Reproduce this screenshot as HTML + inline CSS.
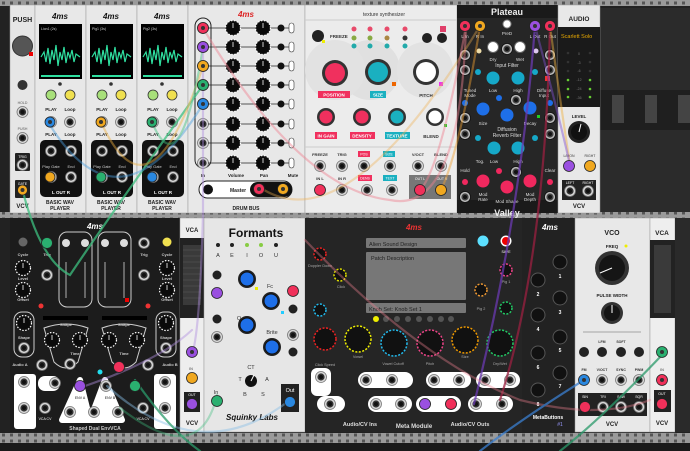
<!DOCTYPE html><html><head><meta charset="utf-8"><style>
html,body{margin:0;padding:0;background:#1c1c1c;width:690px;height:451px;overflow:hidden}
svg{display:block}
text{font-family:"Liberation Sans",sans-serif}
</style></head><body>
<svg width="690" height="451" viewBox="0 0 690 451" xmlns="http://www.w3.org/2000/svg">
<defs>
<pattern id="rail" width="8" height="6" patternUnits="userSpaceOnUse"><rect width="8" height="6" fill="#9a9a9a"/><rect x="2" y="1.5" width="3" height="3" fill="#555"/></pattern>
<g id="jk"><circle r="5.5" fill="#d8d8d8" stroke="#777" stroke-width="0.8"/><circle r="3.6" fill="#333"/><circle r="2" fill="#111"/></g>
<g id="jkd"><circle r="5.5" fill="#bbb" stroke="#111" stroke-width="0.8"/><circle r="3.6" fill="#444"/><circle r="2" fill="#111"/></g>
<g id="kn"><circle r="7.5" fill="#111" stroke="#fff" stroke-width="1.2" stroke-dasharray="1.5 1.5"/><circle r="6" fill="#0a0a0a"/><line x1="0" y1="0" x2="0" y2="-5" stroke="#ccc" stroke-width="1"/></g>
<g id="knb"><circle r="9" fill="#222"/><circle r="7" fill="#1e6fe8"/><circle r="7" fill="none" stroke="#111" stroke-width="1"/></g>
<g id="scr"><circle r="2" fill="#444"/></g>
</defs>
<!-- background rack -->
<rect width="690" height="451" fill="#222"/>
<rect x="600" y="8" width="90" height="205" fill="#2b2b2b"/>
<rect x="600" y="90" width="90" height="40" fill="#1f1f1f"/>
<g fill="#444"><rect x="612" y="95" width="12" height="28"/><rect x="645" y="95" width="12" height="28"/><rect x="678" y="95" width="12" height="28"/></g>
<!-- rails -->
<rect x="0" y="0" width="690" height="6" fill="url(#rail)"/>
<rect x="0" y="212" width="690" height="6" fill="url(#rail)"/>
<rect x="0" y="433" width="690" height="10" fill="url(#rail)"/>
<rect x="0" y="443" width="690" height="8" fill="#1a1a1a"/>

<!-- ===== TOP ROW ===== -->
<!-- PUSH -->
<rect x="10" y="5" width="25" height="208" fill="#e6e6e6" stroke="#999" stroke-width="0.5"/>
<text x="22.5" y="22" font-size="7" font-weight="bold" text-anchor="middle" fill="#222">PUSH</text>
<circle cx="22.5" cy="46" r="10" fill="#555" stroke="#333"/><rect x="29" y="52" width="4" height="4" fill="#e00"/>
<circle cx="22.5" cy="85" r="5" fill="#333"/>
<text x="22.5" y="104" font-size="3.5" text-anchor="middle" fill="#555">HOLD</text>
<use href="#jk" x="22.5" y="112"/>
<text x="22.5" y="130" font-size="3.5" text-anchor="middle" fill="#555">PUSH</text>
<use href="#jk" x="22.5" y="138"/>
<rect x="15" y="153" width="15" height="18" fill="#222" rx="1"/><text x="22.5" y="158" font-size="3.5" fill="#fff" text-anchor="middle">TRIG</text><use href="#jk" x="22.5" y="165"/>
<rect x="15" y="180" width="15" height="18" fill="#222" rx="1"/><text x="22.5" y="185" font-size="3.5" fill="#fff" text-anchor="middle">GATE</text>
<text x="22.5" y="208" font-size="6" font-weight="bold" text-anchor="middle" fill="#222">VCV</text>

<!-- WAV players -->
<g id="wp">
<rect x="35" y="5" width="51" height="208" fill="#e8e8e8" stroke="#999" stroke-width="0.5"/>
<text x="60" y="19" font-size="8" font-weight="bold" font-style="italic" text-anchor="middle" fill="#111">4ms</text>
<rect x="39" y="24" width="43" height="55" fill="#000"/>
<path d="M41 57 L44 52 L46 62 L48 48 L50 64 L52 50 L54 60 L56 45 L58 66 L60 52 L62 60 L64 47 L66 63 L68 52 L70 58 L72 50 L74 62 L76 54 L80 57" stroke="#2fe0a0" stroke-width="1.2" fill="none"/>
<rect x="41" y="75" width="39" height="2" fill="#2fe0a0"/>
<circle cx="60" cy="84" r="1.8" fill="#333"/>
<circle cx="51" cy="95" r="5" fill="#a8e07a" stroke="#333" stroke-width="0.8"/>
<circle cx="70" cy="95" r="5" fill="#f0e050" stroke="#333" stroke-width="0.8"/>
<text x="51" y="111" font-size="4.5" font-weight="bold" text-anchor="middle" fill="#222">PLAY</text>
<text x="70" y="111" font-size="4.5" font-weight="bold" text-anchor="middle" fill="#222">Loop</text>
<use href="#jk" x="51" y="122"/><use href="#jk" x="70" y="122"/>
<text x="51" y="136" font-size="4.5" font-weight="bold" text-anchor="middle" fill="#222">PLAY</text>
<text x="70" y="136" font-size="4.5" font-weight="bold" text-anchor="middle" fill="#222">Loop</text>
<rect x="40" y="140" width="42" height="57" rx="5" fill="#111"/>
<use href="#jk" x="51" y="151"/><use href="#jk" x="71" y="151"/>
<text x="51" y="168" font-size="4" fill="#ccc" text-anchor="middle">Play Gate</text><text x="71" y="168" font-size="4" fill="#ccc" text-anchor="middle">End</text>
<use href="#jk" x="51" y="177"/><use href="#jk" x="71" y="177"/>
<text x="61" y="194" font-size="4.5" fill="#fff" font-weight="bold" text-anchor="middle">L  OUT  R</text>
<text x="60" y="204" font-size="5" font-weight="bold" text-anchor="middle" fill="#222">BASIC WAV</text>
<text x="60" y="210" font-size="5" font-weight="bold" text-anchor="middle" fill="#222">PLAYER</text>
</g>
<use href="#wp" x="51"/><use href="#wp" x="102"/>
<g font-size="3.5" fill="#ccc"><text x="41" y="30">Lion1 (2s)</text><text x="92" y="30">Pig1 (3s)</text><text x="143" y="30">Pig2 (3s)</text></g>

<!-- Drum bus -->
<rect x="188" y="5" width="117" height="208" fill="#e8e8e8" stroke="#999" stroke-width="0.5"/>
<text x="246" y="17" font-size="8" font-weight="bold" font-style="italic" text-anchor="middle" fill="#d22">4ms</text>
<rect x="195" y="18" width="16" height="150" rx="8" fill="none" stroke="#222" stroke-width="1"/>
<g>
<use href="#jk" x="203" y="28"/><use href="#jk" x="203" y="47"/><use href="#jk" x="203" y="66"/><use href="#jk" x="203" y="85"/><use href="#jk" x="203" y="104"/><use href="#jk" x="203" y="124"/><use href="#jk" x="203" y="143"/><use href="#jk" x="203" y="163"/>
</g>
<g stroke="#222" stroke-width="0.8"><line x1="208" y1="28" x2="290" y2="28"/><line x1="208" y1="47" x2="290" y2="47"/><line x1="208" y1="66" x2="290" y2="66"/><line x1="208" y1="85" x2="290" y2="85"/><line x1="208" y1="104" x2="290" y2="104"/><line x1="208" y1="124" x2="290" y2="124"/><line x1="208" y1="143" x2="290" y2="143"/><line x1="208" y1="163" x2="290" y2="163"/></g>
<g>
<use href="#kn" x="233" y="28"/><use href="#kn" x="233" y="47"/><use href="#kn" x="233" y="66"/><use href="#kn" x="233" y="85"/><use href="#kn" x="233" y="104"/><use href="#kn" x="233" y="124"/><use href="#kn" x="233" y="143"/><use href="#kn" x="233" y="163"/>
<use href="#kn" x="263" y="28"/><use href="#kn" x="263" y="47"/><use href="#kn" x="263" y="66"/><use href="#kn" x="263" y="85"/><use href="#kn" x="263" y="104"/><use href="#kn" x="263" y="124"/><use href="#kn" x="263" y="143"/><use href="#kn" x="263" y="163"/>
</g>
<g fill="#111"><circle cx="281" cy="28" r="3.5"/><circle cx="281" cy="47" r="3.5"/><circle cx="281" cy="66" r="3.5"/><circle cx="281" cy="85" r="3.5"/><circle cx="281" cy="104" r="3.5"/><circle cx="281" cy="124" r="3.5"/><circle cx="281" cy="143" r="3.5"/><circle cx="281" cy="163" r="3.5"/></g>
<g fill="#fff" stroke="#333" stroke-width="0.6"><rect x="289" y="23" width="5" height="10" rx="2.5"/><rect x="289" y="42" width="5" height="10" rx="2.5"/><rect x="289" y="61" width="5" height="10" rx="2.5"/><rect x="289" y="80" width="5" height="10" rx="2.5"/><rect x="289" y="99" width="5" height="10" rx="2.5"/><rect x="289" y="119" width="5" height="10" rx="2.5"/><rect x="289" y="138" width="5" height="10" rx="2.5"/><rect x="289" y="158" width="5" height="10" rx="2.5"/></g>
<g font-size="4.5" font-weight="bold" fill="#222" text-anchor="middle"><text x="203" y="177">In</text><text x="236" y="177">Volume</text><text x="264" y="177">Pan</text><text x="293" y="177">Mute</text></g>
<rect x="199" y="181" width="93" height="17" rx="8.5" fill="#fff" stroke="#222"/>
<circle cx="208" cy="189.5" r="5" fill="#111"/>
<text x="230" y="192" font-size="5" font-weight="bold" fill="#222">Master</text>
<rect x="250" y="182" width="42" height="15" rx="7.5" fill="#111"/>
<text x="246" y="210" font-size="5" font-weight="bold" text-anchor="middle" fill="#222">DRUM BUS</text>

<!-- Texture synth -->
<rect x="305" y="5" width="152" height="208" fill="#ececec" stroke="#999" stroke-width="0.5"/>
<text x="384" y="16" font-size="5" text-anchor="middle" fill="#333">texture synthesizer</text>
<line x1="305" y1="20" x2="457" y2="20" stroke="#ccc"/>
<circle cx="370" cy="70" r="30" fill="#e0e0e0"/><circle cx="335" cy="70" r="30" fill="#e2e2e2"/><circle cx="425" cy="70" r="28" fill="#e2e2e2"/>
<circle cx="318" cy="36" r="6" fill="#222"/><rect x="322" y="40" width="3" height="3" fill="#ee0"/>
<text x="330" y="38" font-size="4.5" font-weight="bold" fill="#333">FREEZE</text>
<g fill="#e84a6a"><circle cx="354" cy="29" r="2.5"/><circle cx="370" cy="29" r="2.5"/><circle cx="387" cy="29" r="2.5"/><circle cx="405" cy="29" r="2.5"/></g>
<g fill="#8a4"><circle cx="354" cy="38" r="2.5"/><circle cx="370" cy="38" r="2.5"/></g><circle cx="387" cy="38" r="2.5" fill="#a84"/><circle cx="405" cy="38" r="2.5" fill="#333"/>
<g fill="#2aa"><circle cx="354" cy="46" r="2.5"/><circle cx="370" cy="46" r="2.5"/><circle cx="387" cy="46" r="2.5"/><circle cx="405" cy="46" r="2.5"/></g>
<circle cx="427" cy="38" r="5" fill="#222"/><circle cx="442" cy="38" r="5" fill="#222"/>
<rect x="440" y="26" width="6" height="6" fill="#e0406a"/>
<circle cx="335" cy="73" r="13" fill="#333"/><circle cx="335" cy="73" r="10" fill="#f0305e"/>
<circle cx="378" cy="72" r="13" fill="#333"/><circle cx="378" cy="72" r="10" fill="#1ab0c0"/><rect x="392" y="82" width="4" height="4" fill="#e60"/>
<circle cx="426" cy="72" r="13" fill="#333"/><circle cx="426" cy="72" r="10" fill="#fff"/><rect x="439" y="82" width="4" height="4" fill="#e3e"/>
<rect x="318" y="91" width="32" height="7" fill="#f0305e"/><text x="334" y="96.5" font-size="4.5" fill="#fff" font-weight="bold" text-anchor="middle">POSITION</text>
<rect x="370" y="91" width="16" height="7" fill="#1ab0c0"/><text x="378" y="96.5" font-size="4.5" fill="#fff" font-weight="bold" text-anchor="middle">SIZE</text>
<text x="426" y="97" font-size="4.5" fill="#333" font-weight="bold" text-anchor="middle">PITCH</text>
<circle cx="326" cy="117" r="9" fill="#333"/><circle cx="326" cy="117" r="6.5" fill="#f0305e"/>
<circle cx="362" cy="117" r="9" fill="#333"/><circle cx="362" cy="117" r="6.5" fill="#f0305e"/>
<circle cx="397" cy="117" r="9" fill="#333"/><circle cx="397" cy="117" r="6.5" fill="#1ab0c0"/>
<circle cx="435" cy="117" r="9" fill="#333"/><circle cx="435" cy="117" r="6.5" fill="#fff"/><rect x="444" y="124" width="3" height="3" fill="#2c2"/>
<rect x="315" y="132" width="22" height="7" fill="#f0305e"/><text x="326" y="137.5" font-size="4.5" fill="#fff" font-weight="bold" text-anchor="middle">IN GAIN</text>
<rect x="350" y="132" width="25" height="7" fill="#f0305e"/><text x="362" y="137.5" font-size="4.5" fill="#fff" font-weight="bold" text-anchor="middle">DENSITY</text>
<rect x="385" y="132" width="25" height="7" fill="#1ab0c0"/><text x="397" y="137.5" font-size="4.5" fill="#fff" font-weight="bold" text-anchor="middle">TEXTURE</text>
<text x="431" y="138" font-size="4.5" fill="#333" font-weight="bold" text-anchor="middle">BLEND</text>
<line x1="305" y1="147" x2="457" y2="147" stroke="#ccc"/>
<g font-size="4" font-weight="bold" text-anchor="middle" fill="#333"><text x="320" y="156">FREEZE</text><text x="342" y="156">TRIG</text><text x="418" y="156">V/OCT</text><text x="441" y="156">BLEND</text><text x="320" y="180">IN L</text><text x="342" y="180">IN R</text></g>
<rect x="358" y="151" width="12" height="6" fill="#f0305e"/><text x="364" y="155.5" font-size="3.5" fill="#fff" text-anchor="middle">POS</text>
<rect x="383" y="151" width="12" height="6" fill="#1ab0c0"/><text x="389" y="155.5" font-size="3.5" fill="#fff" text-anchor="middle">SIZE</text>
<rect x="358" y="175" width="14" height="6" fill="#f0305e"/><text x="365" y="179.5" font-size="3.5" fill="#fff" text-anchor="middle">DENS</text>
<rect x="383" y="175" width="14" height="6" fill="#1ab0c0"/><text x="390" y="179.5" font-size="3.5" fill="#fff" text-anchor="middle">TEXT</text>
<use href="#jk" x="320" y="166"/><use href="#jk" x="342" y="166"/><use href="#jk" x="364" y="166"/><use href="#jk" x="390" y="166"/><use href="#jk" x="418" y="166"/><use href="#jk" x="441" y="166"/>
<use href="#jk" x="342" y="190"/><use href="#jk" x="367" y="190"/><use href="#jk" x="392" y="190"/>
<rect x="409" y="175" width="42" height="24" fill="#777"/><text x="420" y="180" font-size="3.5" fill="#fff" text-anchor="middle">OUT L</text><text x="442" y="180" font-size="3.5" fill="#fff" text-anchor="middle">OUT R</text>

<!-- Plateau -->
<rect x="457" y="5" width="101" height="208" fill="#262626"/>
<rect x="457" y="5" width="101" height="13" fill="#1a1a1a"/>
<text x="507" y="15" font-size="9" font-weight="bold" text-anchor="middle" fill="#eee">Plateau</text>
<rect x="457" y="200" width="101" height="13" fill="#1a1a1a"/>
<text x="507" y="216" font-size="9" font-weight="bold" text-anchor="middle" fill="#eee">Valley</text>
<g font-size="4.5" fill="#ddd" text-anchor="middle"><text x="465" y="38">L In</text><text x="480" y="38">R In</text><text x="507" y="35">PreD</text><text x="535" y="38">L Out</text><text x="550" y="38">R Out</text>
<text x="493" y="61">Dry</text><text x="520" y="61">Wet</text><text x="507" y="67" font-size="5">Input Filter</text><text x="470" y="92">Tuned</text><text x="470" y="97">Mode</text><text x="493" y="92">Low</text><text x="518" y="92">High</text><text x="544" y="92">Diffuse</text><text x="544" y="97">Input</text>
<text x="483" y="125">Size</text><text x="507" y="131" font-size="5">Diffusion</text><text x="507" y="137" font-size="5">Reverb Filter</text><text x="530" y="125">Decay</text><text x="480" y="163">Tog.</text><text x="494" y="163">Low</text><text x="518" y="163">High</text><text x="465" y="172">Hold</text><text x="550" y="172">Clear</text>
<text x="483" y="196">Mod</text><text x="483" y="201">Rate</text><text x="507" y="203">Mod Shape</text><text x="530" y="196">Mod</text><text x="530" y="201">Depth</text></g>
<circle cx="507" cy="24" r="4" fill="#fff" stroke="#888"/>
<use href="#jkd" x="507" y="49"/>
<circle cx="493" cy="47" r="5.5" fill="#fff" stroke="#666"/><circle cx="520" cy="47" r="5.5" fill="#fff" stroke="#666"/>
<circle cx="479" cy="51" r="2.5" fill="#eeddaa"/><circle cx="536" cy="51" r="2.5" fill="#ddc8ee"/>
<g><use href="#jkd" x="465" y="55"/><use href="#jkd" x="465" y="70"/><use href="#jkd" x="465" y="118"/><use href="#jkd" x="465" y="134"/><use href="#jkd" x="465" y="197"/>
<use href="#jkd" x="550" y="55"/><use href="#jkd" x="550" y="70"/><use href="#jkd" x="550" y="118"/><use href="#jkd" x="550" y="134"/><use href="#jkd" x="550" y="197"/><use href="#jkd" x="516" y="100"/><use href="#jkd" x="516" y="172"/></g>
<g fill="#16a8c8"><circle cx="493" cy="78" r="6.5"/><circle cx="518" cy="78" r="6.5"/><circle cx="494" cy="148" r="6.5"/><circle cx="518" cy="148" r="6.5"/><circle cx="478" cy="72" r="3"/><circle cx="535" cy="72" r="3"/><circle cx="478" cy="138" r="3"/><circle cx="535" cy="138" r="3"/></g>
<g fill="#1e6fe8"><circle cx="483" cy="109" r="6.5"/><circle cx="507" cy="115" r="6.5"/><circle cx="530" cy="108" r="6.5"/><circle cx="499" cy="98" r="3"/><circle cx="465" cy="103" r="3"/><circle cx="550" cy="103" r="3"/></g>
<g fill="#f0285e"><circle cx="483" cy="181" r="6.5"/><circle cx="507" cy="187" r="6.5"/><circle cx="530" cy="181" r="6.5"/><circle cx="499" cy="171" r="3"/><circle cx="465" cy="182" r="3"/><circle cx="550" cy="182" r="3"/></g>
<rect x="545" y="76" width="5" height="5" fill="#e33"/><rect x="537" y="115" width="3" height="3" fill="#2c2"/>

<!-- AUDIO -->
<rect x="558" y="5" width="42" height="208" fill="#e8e8e8" stroke="#999" stroke-width="0.5"/>
<text x="579" y="21" font-size="6.5" font-weight="bold" text-anchor="middle" fill="#222">AUDIO</text>
<rect x="558" y="27" width="42" height="80" fill="#1a1a1a"/>
<text x="561" y="38" font-size="5.5" font-family="Liberation Mono" fill="#e8a800">Scarlett Solo</text>
<g font-size="3.5" fill="#777" text-anchor="middle"><text x="579" y="55">0</text><text x="579" y="64">-3</text><text x="579" y="72">-6</text><text x="579" y="81">-12</text><text x="579" y="90">-24</text><text x="579" y="99">-36</text></g>
<g fill="#333"><circle cx="568" cy="53" r="1.3"/><circle cx="590" cy="53" r="1.3"/><circle cx="568" cy="62" r="1.3"/><circle cx="590" cy="62" r="1.3"/><circle cx="568" cy="71" r="1.3"/><circle cx="590" cy="71" r="1.3"/></g>
<g fill="#6c3"><circle cx="568" cy="80" r="1.3"/><circle cx="590" cy="80" r="1.3"/><circle cx="568" cy="89" r="1.3"/><circle cx="590" cy="89" r="1.3"/><circle cx="568" cy="97" r="1.3"/><circle cx="590" cy="97" r="1.3"/></g>
<text x="579" y="118" font-size="4.5" font-weight="bold" text-anchor="middle" fill="#222">LEVEL</text>
<circle cx="579" cy="132" r="11" fill="#222"/><circle cx="579" cy="132" r="8" fill="#111"/><line x1="579" y1="132" x2="581" y2="124" stroke="#fff"/>
<g font-size="3.5" fill="#333" text-anchor="middle"><text x="569" y="157">L/MON</text><text x="590" y="157">RIGHT</text></g>
<rect x="562" y="180" width="34" height="20" fill="#222"/><g font-size="3.5" fill="#fff" text-anchor="middle"><text x="570" y="184">LEFT</text><text x="588" y="184">RIGHT</text></g>
<use href="#jk" x="570" y="191"/><use href="#jk" x="588" y="191"/>
<text x="579" y="208" font-size="6" font-weight="bold" text-anchor="middle" fill="#222">VCV</text>

<!-- ===== BOTTOM ROW ===== -->
<!-- Shaped Dual EnvVCA -->
<rect x="10" y="218" width="170" height="214" fill="#1c1c1c"/>
<text x="95" y="229" font-size="8" font-weight="bold" font-style="italic" text-anchor="middle" fill="#fff">4ms</text>
<rect x="59" y="232" width="33" height="75" rx="8" fill="none" stroke="#ccc"/><rect x="98" y="232" width="33" height="75" rx="8" fill="none" stroke="#ccc"/>
<g fill="#ddd"><circle cx="66" cy="243" r="4"/><circle cx="85" cy="243" r="4"/><circle cx="105" cy="243" r="4"/><circle cx="124" cy="243" r="4"/></g>
<g stroke="#666" stroke-width="2"><line x1="66" y1="262" x2="66" y2="298"/><line x1="85" y1="262" x2="85" y2="298"/><line x1="105" y1="262" x2="105" y2="298"/><line x1="124" y1="262" x2="124" y2="298"/></g>
<rect x="125" y="298" width="4" height="4" fill="#e00"/>
<g fill="#666"><circle cx="23" cy="242" r="4.5"/></g><circle cx="167" cy="242" r="4.5" fill="#f0e050"/>
<g font-size="4" font-weight="bold" fill="#ccc" text-anchor="middle"><text x="23" y="256">Cycle</text><text x="47" y="256">Trig</text><text x="144" y="256">Trig</text><text x="167" y="256">Cycle</text><text x="23" y="280">Level</text><text x="167" y="280">Level</text><text x="23" y="301">Offset</text><text x="167" y="301">Offset</text><text x="66" y="326">Shape</text><text x="124" y="326">Shape</text><text x="24" y="339">Shape</text><text x="166" y="339">Shape</text><text x="75" y="355">Time</text><text x="124" y="355">Time</text><text x="20" y="366">Audio A</text><text x="170" y="366">Audio B</text><text x="95" y="430" font-size="5">Shaped Dual EnvVCA</text></g>
<use href="#jk" x="144" y="243"/><use href="#jk" x="47" y="275"/><use href="#jk" x="144" y="275"/>
<use href="#kn" x="23" y="268"/><use href="#kn" x="167" y="268"/><use href="#kn" x="23" y="290"/><use href="#kn" x="167" y="290"/>
<circle cx="41" cy="306" r="2.5" fill="#e33"/><circle cx="148" cy="306" r="2.5" fill="#e33"/>
<rect x="43" y="316" width="45" height="4" fill="#000"/><rect x="102" y="316" width="45" height="4" fill="#000"/>
<rect x="14" y="312" width="20" height="45" rx="8" fill="none" stroke="#ccc"/><rect x="156" y="312" width="20" height="45" rx="8" fill="none" stroke="#ccc"/>
<use href="#kn" x="24" y="323"/><use href="#kn" x="166" y="323"/><use href="#jk" x="24" y="348"/><use href="#jk" x="166" y="348"/>
<path d="M44 328 Q66 320 88 328 L78 362 Q66 374 54 362 Z" fill="none" stroke="#ccc"/>
<path d="M102 328 Q124 320 146 328 L136 362 Q124 374 112 362 Z" fill="none" stroke="#ccc"/>
<use href="#kn" x="52" y="340"/><use href="#kn" x="80" y="340"/><use href="#kn" x="109" y="340"/><use href="#kn" x="137" y="340"/>
<use href="#jk" x="70" y="364"/><use href="#jk" x="42" y="365"/><use href="#jk" x="148" y="365"/>
<circle cx="100" cy="372" r="2.5" fill="#2de"/>
<rect x="14" y="374" width="22" height="55" fill="#fff" rx="3"/><rect x="154" y="374" width="22" height="55" fill="#fff" rx="3"/>
<use href="#jk" x="24" y="382"/><use href="#jk" x="165" y="382"/><use href="#jk" x="24" y="408"/><use href="#jk" x="165" y="408"/>
<rect x="38" y="376" width="22" height="15" rx="7" fill="#fff"/><use href="#jk" x="55" y="383"/>
<path d="M62 420 L80 380 L90 420 Z" fill="#fff" stroke="#fff" stroke-width="6" stroke-linejoin="round"/>
<path d="M90 420 L105 380 L122 420 Z" fill="#fff" stroke="#fff" stroke-width="6" stroke-linejoin="round"/>
<use href="#jk" x="106" y="386"/><use href="#jk" x="70" y="412"/><use href="#jk" x="94" y="412"/><use href="#jk" x="118" y="412"/><use href="#jk" x="45" y="408"/><use href="#jk" x="143" y="408"/>
<g font-size="3.5" fill="#fff" text-anchor="middle"><text x="24" y="420">Out</text><text x="165" y="420">Out</text><text x="45" y="420">VCA CV</text><text x="143" y="420">VCA CV</text><text x="80" y="399" fill="#111">ENV A</text><text x="110" y="399" fill="#111">ENV B</text></g>

<!-- VCA 1 -->
<rect x="180" y="218" width="24" height="214" fill="#eee" stroke="#999" stroke-width="0.5"/>
<text x="192" y="232" font-size="6" font-weight="bold" text-anchor="middle" fill="#222">VCA</text>
<rect x="180" y="238" width="24" height="80" fill="#222"/>
<rect x="183" y="245" width="18" height="60" fill="#3a3a3a"/>
<g stroke="#4a4a4a" stroke-width="1"><line x1="183" y1="250" x2="201" y2="250"/><line x1="183" y1="256" x2="201" y2="256"/><line x1="183" y1="262" x2="201" y2="262"/><line x1="183" y1="268" x2="201" y2="268"/><line x1="183" y1="274" x2="201" y2="274"/><line x1="183" y1="280" x2="201" y2="280"/><line x1="183" y1="286" x2="201" y2="286"/><line x1="183" y1="292" x2="201" y2="292"/><line x1="183" y1="298" x2="201" y2="298"/></g>
<text x="191" y="370" font-size="3.5" text-anchor="middle" fill="#333">IN</text>
<rect x="184" y="392" width="16" height="20" fill="#222"/><text x="192" y="396" font-size="3.5" fill="#fff" text-anchor="middle">OUT</text>
<text x="192" y="425" font-size="6" font-weight="bold" text-anchor="middle" fill="#222">VCV</text>

<!-- Formants -->
<rect x="204" y="218" width="101" height="214" fill="#e6e6e6" stroke="#999" stroke-width="0.5"/>
<text x="256" y="237" font-size="12" font-weight="bold" font-family="Liberation Serif" text-anchor="middle" fill="#111">Formants</text>
<g fill="#222"><circle cx="218" cy="245" r="2"/><circle cx="232" cy="245" r="2"/><circle cx="276" cy="245" r="2"/></g><g fill="#8c4"><circle cx="247" cy="245" r="2"/><circle cx="261" cy="245" r="2"/></g>
<g font-size="5.5" fill="#333" text-anchor="middle"><text x="218" y="257">A</text><text x="232" y="257">E</text><text x="247" y="257">I</text><text x="261" y="257">O</text><text x="276" y="257">U</text><text x="270" y="288">Fc</text><text x="239" y="320">Q</text><text x="272" y="334">Brite</text><text x="251" y="369">CT</text><text x="240" y="381">T</text><text x="267" y="381">A</text><text x="245" y="396">B</text><text x="263" y="396">S</text><text x="216" y="394">In</text><text x="290" y="392">Out</text></g>
<circle cx="217" cy="275" r="4.5" fill="#222"/><circle cx="217" cy="319" r="4.5" fill="#222"/><circle cx="293" cy="309" r="4.5" fill="#222"/><circle cx="293" cy="352" r="4.5" fill="#222"/>
<use href="#jk" x="217" y="337"/><use href="#jk" x="293" y="335"/>
<use href="#knb" x="247" y="279"/><use href="#knb" x="271" y="301"/><use href="#knb" x="247" y="325"/><use href="#knb" x="272" y="347"/>
<rect x="255" y="287" width="3" height="3" fill="#ee0"/><rect x="281" y="311" width="3" height="3" fill="#2cf"/>
<circle cx="251" cy="381" r="6" fill="#111"/><line x1="251" y1="381" x2="254" y2="375" stroke="#fff"/>
<rect x="281" y="384" width="18" height="28" fill="#222"/><text x="290" y="392" font-size="5.5" fill="#fff" text-anchor="middle">Out</text>
<text x="252" y="420" font-size="8" font-family="Liberation Serif" font-style="italic" font-weight="bold" text-anchor="middle" fill="#111">Squinky Labs</text>

<!-- Meta Module -->
<rect x="305" y="218" width="217" height="214" fill="#252525"/>
<text x="414" y="230" font-size="8" font-weight="bold" font-style="italic" text-anchor="middle" fill="#e33">4ms</text>
<rect x="366" y="238" width="100" height="10" fill="#777" rx="1"/><text x="369" y="246" font-size="5.5" font-family="Liberation Mono" fill="#222">Alien Sound Design</text>
<rect x="366" y="252" width="100" height="48" fill="#777" rx="1"/><text x="371" y="260" font-size="5.5" font-family="Liberation Mono" fill="#222">Patch Description</text>
<rect x="366" y="303" width="100" height="10" fill="#777" rx="1"/><text x="369" y="311" font-size="5.5" font-family="Liberation Mono" fill="#222">Knob Set: Knob Set 1</text>
<circle cx="483" cy="241" r="5.5" fill="#5ce0ff"/><circle cx="506" cy="241" r="5.5" fill="#fff"/><circle cx="506" cy="241" r="4" fill="#e00"/>
<text x="506" y="253" font-size="3.5" fill="#fff" text-anchor="middle">SAVE</text>
<circle cx="376" cy="319" r="3" fill="#ee0"/><g fill="#555"><circle cx="386" cy="319" r="3"/><circle cx="397" cy="319" r="3"/><circle cx="408" cy="319" r="3"/><circle cx="419" cy="319" r="3"/><circle cx="430" cy="319" r="3"/><circle cx="441" cy="319" r="3"/><circle cx="451" cy="319" r="3"/></g>
<g fill="#111" stroke-width="1.5" stroke-dasharray="2 1.5">
<circle cx="320" cy="254" r="6" stroke="#e22"/><circle cx="340" cy="275" r="6" stroke="#dd0"/><circle cx="320" cy="310" r="6" stroke="#2be"/><circle cx="481" cy="290" r="6" stroke="#e93"/><circle cx="506" cy="270" r="6" stroke="#e48"/><circle cx="506" cy="308" r="6" stroke="#2c6"/>
<circle cx="325" cy="339" r="11" stroke="#e22"/><circle cx="358" cy="339" r="13" stroke="#ee0"/><circle cx="394" cy="343" r="13" stroke="#2be"/><circle cx="430" cy="343" r="13" stroke="#e48"/><circle cx="465" cy="340" r="13" stroke="#e90"/><circle cx="500" cy="343" r="13" stroke="#2c6"/></g>
<g font-size="3.8" fill="#aaa" text-anchor="middle"><text x="320" y="267">Doppler Down</text><text x="341" y="288">Click</text><text x="325" y="366">Click Speed</text><text x="358" y="358">Vowel</text><text x="393" y="365">Vowel Cutoff</text><text x="430" y="365">Pitch</text><text x="465" y="358">Size</text><text x="500" y="365">Dry/Wet</text><text x="481" y="310">Pig 2</text><text x="506" y="283">Pig 1</text></g>
<g fill="#fff"><rect x="311" y="368" width="20" height="28" rx="6"/><rect x="358" y="372" width="55" height="16" rx="8"/><rect x="426" y="372" width="45" height="16" rx="8"/><rect x="476" y="372" width="44" height="16" rx="8"/><rect x="317" y="396" width="28" height="16" rx="8"/><rect x="368" y="396" width="44" height="16" rx="8"/><rect x="416" y="396" width="45" height="16" rx="8"/><rect x="468" y="396" width="45" height="16" rx="8"/></g>
<use href="#jk" x="321" y="377"/><use href="#jk" x="366" y="380"/><use href="#jk" x="392" y="380"/><use href="#jk" x="434" y="380"/><use href="#jk" x="459" y="380"/><use href="#jk" x="485" y="380"/><use href="#jk" x="510" y="380"/>
<use href="#jk" x="330" y="404"/><use href="#jk" x="376" y="404"/><use href="#jk" x="401" y="404"/><use href="#jk" x="425" y="404"/><use href="#jk" x="451" y="404"/><use href="#jk" x="476" y="404"/><use href="#jk" x="502" y="404"/>
<text x="360" y="426" font-size="5.5" font-weight="bold" text-anchor="middle" fill="#ddd">Audio/CV Ins</text>
<text x="414" y="428" font-size="6" font-weight="bold" text-anchor="middle" fill="#ddd">Meta Module</text>
<text x="470" y="426" font-size="5.5" font-weight="bold" text-anchor="middle" fill="#ddd">Audio/CV Outs</text>

<!-- MetaButtons -->
<rect x="522" y="218" width="53" height="214" fill="#222"/>
<text x="550" y="230" font-size="8" font-weight="bold" font-style="italic" text-anchor="middle" fill="#fff">4ms</text>
<g fill="#111" stroke="#555" stroke-width="1"><circle cx="560" cy="262" r="7"/><circle cx="538" cy="280" r="7"/><circle cx="560" cy="298" r="7"/><circle cx="538" cy="315" r="7"/><circle cx="560" cy="337" r="7"/><circle cx="538" cy="353" r="7"/><circle cx="560" cy="373" r="7"/><circle cx="538" cy="390" r="7"/></g>
<g font-size="5" font-weight="bold" fill="#fff" text-anchor="middle"><text x="560" y="278">1</text><text x="538" y="296">2</text><text x="560" y="314">3</text><text x="538" y="331">4</text><text x="560" y="352">5</text><text x="538" y="369">6</text><text x="560" y="388">7</text><text x="538" y="406">8</text></g>
<text x="548" y="419" font-size="5" font-weight="bold" text-anchor="middle" fill="#fff">MetaButtons</text><text x="560" y="426" font-size="5" text-anchor="middle" fill="#99f">#1</text>

<!-- VCO -->
<rect x="575" y="218" width="75" height="214" fill="#e8e8e8" stroke="#999" stroke-width="0.5"/>
<text x="612" y="235" font-size="7" font-weight="bold" text-anchor="middle" fill="#222">VCO</text>
<text x="612" y="248" font-size="4.5" font-weight="bold" text-anchor="middle" fill="#222">FREQ</text><circle cx="626" cy="246" r="1.5" fill="#ee0"/>
<circle cx="612" cy="268" r="17" fill="#333"/><circle cx="612" cy="268" r="13" fill="#151515"/><line x1="612" y1="268" x2="600" y2="273" stroke="#fff"/>
<text x="612" y="297" font-size="4.5" font-weight="bold" text-anchor="middle" fill="#222">PULSE WIDTH</text>
<circle cx="612" cy="313" r="11" fill="#333"/><circle cx="612" cy="313" r="8" fill="#151515"/><line x1="612" y1="313" x2="612" y2="305" stroke="#fff"/>
<line x1="583" y1="332" x2="641" y2="332" stroke="#bbb" stroke-width="1.5"/>
<g fill="#222"><circle cx="584" cy="352" r="5"/><circle cx="602" cy="352" r="5"/><circle cx="621" cy="352" r="5"/><circle cx="639" cy="352" r="5"/></g>
<g font-size="3.5" font-weight="bold" text-anchor="middle" fill="#333"><text x="602" y="343">LFM</text><text x="621" y="343">SOFT</text><text x="584" y="371">FM</text><text x="602" y="371">V/OCT</text><text x="621" y="371">SYNC</text><text x="639" y="371">PWM</text></g>
<use href="#jk" x="602" y="380"/><use href="#jk" x="621" y="380"/><use href="#jk" x="639" y="380"/>
<rect x="578" y="393" width="69" height="23" fill="#222"/>
<g font-size="3.5" fill="#fff" text-anchor="middle"><text x="585" y="398">SIN</text><text x="603" y="398">TRI</text><text x="621" y="398">SAW</text><text x="639" y="398">SQR</text></g>
<use href="#jk" x="603" y="407"/><use href="#jk" x="621" y="407"/><use href="#jk" x="639" y="407"/>
<text x="612" y="426" font-size="6" font-weight="bold" text-anchor="middle" fill="#222">VCV</text>

<!-- VCA 2 -->
<rect x="650" y="218" width="25" height="214" fill="#eee" stroke="#999" stroke-width="0.5"/>
<text x="662" y="235" font-size="6.5" font-weight="bold" text-anchor="middle" fill="#222">VCA</text>
<rect x="650" y="240" width="25" height="78" fill="#222"/><rect x="654" y="245" width="17" height="68" fill="#3a3a3a"/>
<text x="662" y="371" font-size="3.5" text-anchor="middle" fill="#333">IN</text>
<rect x="654" y="390" width="17" height="22" fill="#222"/><text x="662" y="395" font-size="3.5" fill="#fff" text-anchor="middle">OUT</text>
<text x="662" y="425" font-size="6" font-weight="bold" text-anchor="middle" fill="#222">VCV</text>
<rect x="675" y="218" width="15" height="214" fill="#2a2a2a"/>

<!-- ===== CABLES ===== -->
<g fill="none" stroke-width="2.2" stroke-linecap="round" opacity="0.75">
<path d="M22 188 Q40 260 70 275 Q100 230 203 85" stroke="#3dbf7f"/>
<path d="M48 122 Q120 240 203 104" stroke="#4a9ee0" opacity="0.6"/>
<path d="M101 122 Q150 230 203 66" stroke="#f0b040" opacity="0.6"/>
<path d="M152 122 Q180 190 203 47" stroke="#3dbf7f" opacity="0.6"/>
<path d="M203 28 Q300 190 390 200 Q460 215 466 26" stroke="#f08090" opacity="0.6"/>
<path d="M203 47 L203 213 Q200 330 192 355" stroke="#b090e0" opacity="0.6"/>
<path d="M264 190 Q350 240 480 26" stroke="#f0b050" opacity="0.5"/>
<path d="M420 190 Q440 170 466 26" stroke="#f08090" opacity="0.6"/>
<path d="M441 190 Q460 150 480 26" stroke="#f0a030" opacity="0.6"/>
<path d="M535 26 Q520 220 474 404" stroke="#6a3ab0"/>
<path d="M550 26 Q545 260 500 400" stroke="#9a2040"/>
<path d="M550 26 Q560 100 570 165" stroke="#f0b040" opacity="0.6"/>
<path d="M535 26 Q560 120 570 165" stroke="#8050d0" opacity="0.6"/>
<path d="M305 240 Q420 360 520 400 Q600 420 650 400" stroke="#f08090" opacity="0.5"/>
<path d="M584 380 Q520 420 480 451" stroke="#3a7fd0"/>
<path d="M662 355 Q600 420 560 451" stroke="#2a9a6a"/>
<path d="M107 386 Q200 470 290 400" stroke="#88c0e8" opacity="0.6"/>
<path d="M85 386 Q160 360 192 330" stroke="#b090e0" opacity="0.6"/>
<path d="M135 380 Q170 430 200 451" stroke="#2a9a6a"/>
<path d="M120 408 Q200 470 217 395" stroke="#3dbf7f" opacity="0.5"/>
</g>
<!-- colored cable plugs -->
<g stroke="#222" stroke-width="0.8">
<circle cx="22.5" cy="190" r="5" fill="#f0a820"/>
<circle cx="50" cy="122" r="5" fill="#2a88e0"/><circle cx="101" cy="122" r="5" fill="#f0a820"/><circle cx="152" cy="122" r="5" fill="#2ab070"/>
<circle cx="50" cy="177" r="5" fill="#f0a820"/><circle cx="101" cy="177" r="5" fill="#2ab070"/><circle cx="152" cy="177" r="5" fill="#2a88e0"/>
<circle cx="203" cy="28" r="5.5" fill="#f0305a"/><circle cx="203" cy="47" r="5.5" fill="#9a50e0"/><circle cx="203" cy="66" r="5.5" fill="#f0a820"/><circle cx="203" cy="85" r="5.5" fill="#2ab070"/><circle cx="203" cy="104" r="5.5" fill="#2a88e0"/>
<circle cx="259" cy="189" r="5.5" fill="#f0305a"/><circle cx="283" cy="189" r="5.5" fill="#f0a820"/>
<circle cx="320" cy="190" r="5.5" fill="#f0305a"/><circle cx="420" cy="190" r="5.5" fill="#f0305a"/><circle cx="441" cy="190" r="5.5" fill="#f0a820"/>
<circle cx="465" cy="26" r="5.5" fill="#f0305a"/><circle cx="480" cy="26" r="5.5" fill="#f0a820"/><circle cx="535" cy="26" r="5.5" fill="#9a50e0"/><circle cx="550" cy="26" r="5.5" fill="#f0305a"/>
<circle cx="569" cy="166" r="5.5" fill="#9a50e0"/><circle cx="590" cy="166" r="5.5" fill="#f0a820"/>
<circle cx="47" cy="243" r="5.5" fill="#2ab070"/>
<circle cx="119" cy="367" r="5.5" fill="#f0305a"/><circle cx="80" cy="386" r="5.5" fill="#9a50e0"/><circle cx="135" cy="386" r="5.5" fill="#2ab070"/>
<circle cx="192" cy="352" r="5.5" fill="#9a50e0"/><circle cx="192" cy="378" r="5.5" fill="#f0a820"/><circle cx="192" cy="404" r="5.5" fill="#9a50e0"/>
<circle cx="217" cy="293" r="5.5" fill="#9a50e0"/><circle cx="293" cy="291" r="5.5" fill="#f0305a"/><circle cx="217" cy="401" r="5.5" fill="#2ab070"/><circle cx="290" cy="402" r="5.5" fill="#2a88e0"/>
<circle cx="425" cy="404" r="5.5" fill="#9a50e0"/><circle cx="451" cy="404" r="5.5" fill="#f0305a"/>
<circle cx="584" cy="380" r="5.5" fill="#2a88e0"/><circle cx="585" cy="407" r="5.5" fill="#f0305a"/>
<circle cx="662" cy="352" r="5.5" fill="#2ab070"/><circle cx="662" cy="380" r="5.5" fill="#f0305a"/><circle cx="662" cy="404" r="5.5" fill="#f0305a"/>
</g>
<g fill="#333"><circle cx="22.5" cy="190" r="2"/><circle cx="50" cy="122" r="2"/><circle cx="101" cy="122" r="2"/><circle cx="152" cy="122" r="2"/><circle cx="203" cy="28" r="2"/><circle cx="203" cy="47" r="2"/><circle cx="203" cy="66" r="2"/><circle cx="203" cy="85" r="2"/><circle cx="203" cy="104" r="2"/><circle cx="259" cy="189" r="2"/><circle cx="283" cy="189" r="2"/><circle cx="465" cy="26" r="2"/><circle cx="480" cy="26" r="2"/><circle cx="535" cy="26" r="2"/><circle cx="550" cy="26" r="2"/><circle cx="662" cy="352" r="2"/><circle cx="662" cy="380" r="2"/><circle cx="192" cy="352" r="2"/><circle cx="584" cy="380" r="2"/></g>
</svg>
</body></html>
